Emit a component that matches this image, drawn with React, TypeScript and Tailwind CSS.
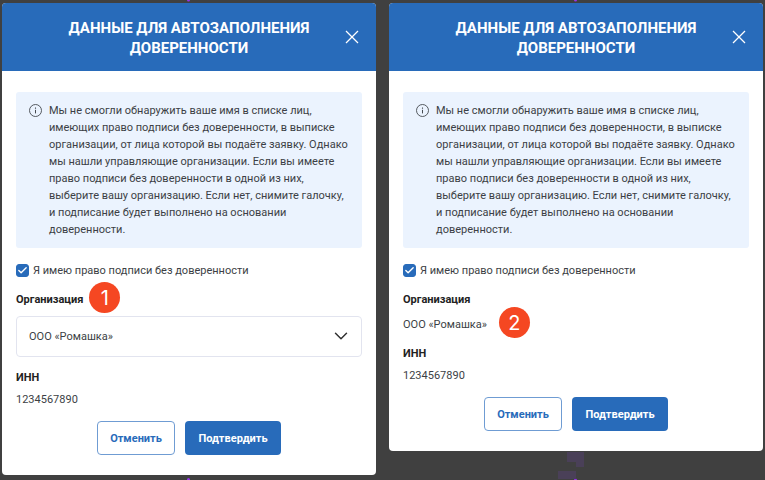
import { useId, useState } from "react";
import { Check, ChevronDown, X } from "lucide-react";

const NOTICE_LINES = [
  "Мы не смогли обнаружить ваше имя в списке лиц,",
  "имеющих право подписи без доверенности, в выписке",
  "организации, от лица которой вы подаёте заявку. Однако",
  "мы нашли управляющие организации. Если вы имеете",
  "право подписи без доверенности в одной из них,",
  "выберите вашу организацию. Если нет, снимите галочку,",
  "и подписание будет выполнено на основании",
  "доверенности.",
];

function InfoIcon() {
  return (
    <svg viewBox="0 0 13 13" className="mt-0.5 size-[13px] shrink-0" fill="none" stroke="#45494f" aria-hidden="true">
      <circle cx="6.5" cy="6.5" r="6" strokeWidth="0.9" />
      <path d="M6.5 5.8v3.6" strokeWidth="1" />
      <path d="M6.5 3.6v1.1" strokeWidth="1.1" />
    </svg>
  );
}

/* Numbered callout that hangs over the page, to the right of the text it explains. */
function Marker({ value }: { value: number }) {
  return (
    <span className="absolute bottom-[-5px] left-full flex size-[31px] items-center justify-center rounded-full bg-[#f54722] font-['Inter',sans-serif] text-xl font-normal text-white">
      {value}
    </span>
  );
}

function Dialog({ selectable }: { selectable: boolean }) {
  const [checked, setChecked] = useState(true);
  const id = useId();

  return (
    <section
      role="dialog"
      aria-labelledby={`${id}-title`}
      className="min-w-0 flex-1 overflow-hidden rounded-[4px] bg-white"
    >
      <header className="relative bg-[#286bba] px-12 pt-[15px] pb-[13px]">
        <h2 id={`${id}-title`} className="text-center text-[15px] leading-5 font-bold whitespace-nowrap text-white">
          ДАННЫЕ ДЛЯ АВТОЗАПОЛНЕНИЯ
          <br />
          ДОВЕРЕННОСТИ
        </h2>
        <button type="button" aria-label="Закрыть" className="absolute inset-y-0 right-3 flex items-center text-white">
          <X size={24} strokeWidth={1.3} absoluteStrokeWidth strokeLinecap="butt" />
        </button>
      </header>

      <div className="px-3.5 pt-[21px] pb-5">
        <div className="flex gap-[7px] rounded-[3px] bg-[#ebf3fe] px-[13px] py-2.5">
          <InfoIcon />
          <p className="whitespace-nowrap">
            {NOTICE_LINES.map((line) => (
              <span key={line} className="block">
                {line}
              </span>
            ))}
          </p>
        </div>

        <label className="mt-3.5 flex items-center gap-1">
          <span className="relative size-[13px] shrink-0">
            <input
              type="checkbox"
              checked={checked}
              onChange={(e) => setChecked(e.target.checked)}
              className="block size-full appearance-none rounded-[3px] border border-[#286bba] bg-white checked:bg-[#286bba]"
            />
            {checked && (
              <Check size={11} strokeWidth={3} className="pointer-events-none absolute top-px left-px text-white" />
            )}
          </span>
          Я имею право подписи без доверенности
        </label>

        <div className="mt-3 flex">
          <span className="relative pr-1.5 font-bold text-[#222]">
            {selectable ? <label htmlFor={`${id}-org`}>Организация</label> : "Организация"}
            {selectable && <Marker value={1} />}
          </span>
        </div>

        {selectable ? (
          <div className="relative mt-2">
            <select
              id={`${id}-org`}
              className="block h-[41px] w-full appearance-none rounded-[4px] border border-[#e2e4ef] bg-white pr-10 pl-3"
            >
              <option>ООО «Ромашка»</option>
            </select>
            <ChevronDown
              size={22}
              strokeWidth={1.5}
              absoluteStrokeWidth
              className="pointer-events-none absolute top-[9px] right-2.5 text-[#333]"
            />
          </div>
        ) : (
          <div className="mt-2 flex">
            <span className="relative pr-3">
              ООО «Ромашка»
              <Marker value={2} />
            </span>
          </div>
        )}

        <dl className="mt-3">
          <dt className="font-bold text-[#222]">ИНН</dt>
          <dd className="mt-[5px]">1234567890</dd>
        </dl>

        <div className="mt-[13px] flex justify-center gap-2.5 font-bold">
          <button type="button" className="h-[34px] w-[78px] rounded-[4px] border border-[#6f9cd3] text-[#286bba]">
            Отменить
          </button>
          <button type="button" className="h-[34px] w-24 rounded-[4px] bg-[#286bba] text-white">
            Подтвердить
          </button>
        </div>
      </div>
    </section>
  );
}

/* Purple marks of the page behind the dialogs. */
function Backdrop() {
  return (
    <svg viewBox="0 0 765 480" className="absolute inset-0 size-full" aria-hidden="true">
      <g fill="#9333ea">
        <circle cx="188.5" cy="0" r="1.5" />
        <circle cx="575.5" cy="0" r="1.5" />
        <circle cx="188.5" cy="479.5" r="1.5" />
        <circle cx="575.5" cy="480" r="1.5" />
      </g>
      <path d="M567 452h17v15h-8v-5h-9zM558 471h18v8h-18z" fill="#4a4058" />
    </svg>
  );
}

export default function App() {
  return (
    <main className="relative min-h-screen bg-[#404040] font-['Roboto',sans-serif] text-[11px] leading-[17px] text-[#3c3f45]">
      <Backdrop />
      <div className="relative flex items-start gap-[13px] px-0.5 pt-[3px]">
        <Dialog selectable />
        <Dialog selectable={false} />
      </div>
    </main>
  );
}
